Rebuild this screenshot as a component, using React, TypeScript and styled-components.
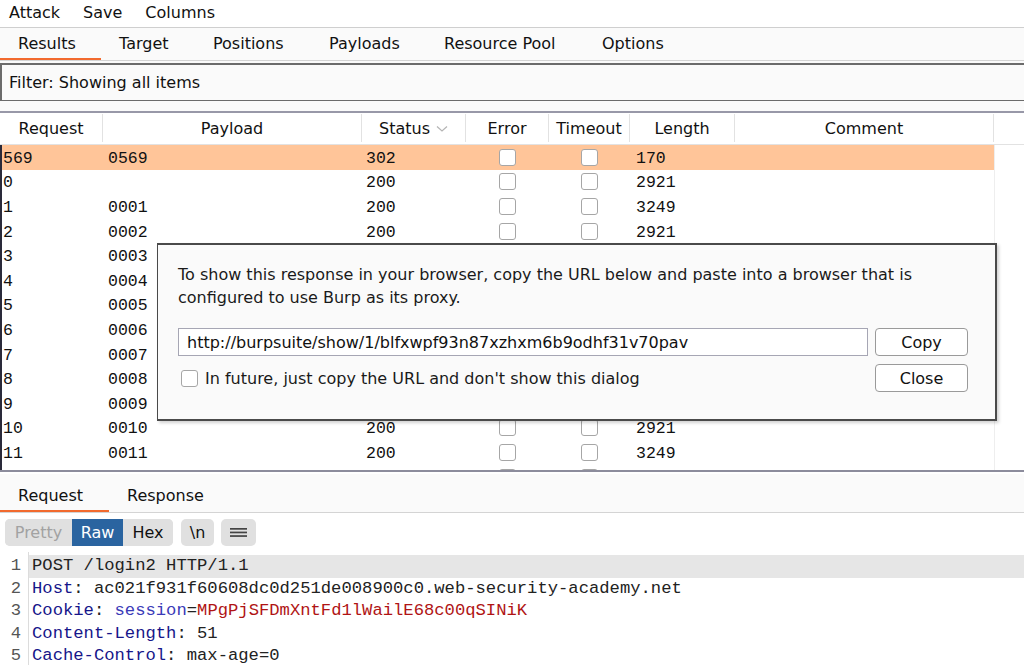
import React from "react";
import styled, { createGlobalStyle } from "styled-components";

const GlobalStyle = createGlobalStyle`
  html, body { margin: 0; padding: 0; background: #ffffff; }
  body { font-family: "DejaVu Sans", "Noto Sans", sans-serif; font-size: 16px; color: #111; }
  * { box-sizing: border-box; }
`;

const Page = styled.div`
  position: relative;
  width: 1024px;
  height: 665px;
  overflow: hidden;
  display: flex;
  flex-direction: column;
  background: #ffffff;
`;

const MenuBar = styled.div`
  height: 28px;
  flex: none;
  display: flex;
  align-items: center;
  gap: 23px;
  padding: 0 0 3px 9px;
  border-bottom: 1px solid #cfcfcf;
  background: #ffffff;
`;

const MenuItem = styled.span`
  color: #111;
`;

const TabBar = styled.div<{ $mt?: number }>`
  flex: none;
  display: flex;
  align-items: stretch;
  margin-top: ${(p) => p.$mt ?? 0}px;
  background: #fafafa;
  border-bottom: 1px solid #d4d4d4;
`;

const Tab = styled.div<{ $active?: boolean; $w: number; $h: number; $top?: number }>`
  width: ${(p) => p.$w}px;
  height: ${(p) => p.$h}px;
  padding-left: 18px;
  padding-top: ${(p) => p.$top ?? 0}px;
  display: flex;
  align-items: center;
  color: #111;
  border-bottom: 2px solid ${(p) => (p.$active ? "#f26a2e" : "transparent")};
  white-space: nowrap;
`;

const FilterArea = styled.div`
  flex: none;
  background: #fafafa;
  padding: 2px 0 10px 0;
`;

const FilterBox = styled.div`
  height: 38px;
  border-top: 2px solid #6b6b6b;
  border-left: 2px solid #6b6b6b;
  border-bottom: 1px solid #6b6b6b;
  display: flex;
  align-items: center;
  padding-left: 7px;
  background: #fafafa;
  color: #111;
`;

const cols = "103px 259px 104px 83px 81px 105px 259px 1fr";

const Table = styled.div`
  flex: none;
  border-top: 2px solid #9898a8;
  border-bottom: 2px solid #8c8c9c;
  background: #ffffff;
`;

const HeaderRow = styled.div`
  display: grid;
  grid-template-columns: ${cols};
  height: 32px;
  border-bottom: 1px solid #e2e2e2;
  background: #ffffff;
`;

const HeaderCell = styled.div`
  display: flex;
  align-items: center;
  justify-content: center;
  gap: 6px;
  padding-top: 1px;
  color: #111;
  border-right: 1px solid #e2e2e2;
  margin: 1px 0 2px;
  &:last-child { border-right: none; }
`;

const Body = styled.div`
  height: 325px;
  overflow: hidden;
  border-left: 2px solid #2a2a3a;
`;

const Row = styled.div`
  display: grid;
  grid-template-columns: 101px 259px 104px 83px 81px 105px 259px 1fr;
  height: 24.6px;
  font-family: "Liberation Mono", "DejaVu Sans Mono", monospace;
  font-size: 16.5px;
  color: #111;
`;

const Cell = styled.div<{ $selected?: boolean; $pad?: number; $center?: boolean; $tail?: boolean }>`
  display: flex;
  align-items: center;
  justify-content: ${(p) => (p.$center ? "center" : "flex-start")};
  padding-left: ${(p) => p.$pad ?? 4}px;
  padding-top: ${(p) => (p.$center ? 0 : 2)}px;
  background: ${(p) => (p.$selected && !p.$tail ? "#ffc599" : "transparent")};
  border-left: ${(p) => (p.$tail ? "1px solid #eeeeee" : "none")};
  white-space: nowrap;
  overflow: hidden;
`;

const Check = styled.span`
  display: inline-block;
  flex: none;
  width: 17px;
  height: 17px;
  border: 1px solid #a6a6a6;
  border-radius: 3px;
  background: #ffffff;
`;

const Bottom = styled.div`
  flex: 1;
  min-height: 0;
  overflow: hidden;
  display: flex;
  flex-direction: column;
  background: #ffffff;
`;

const Toolbar = styled.div`
  flex: none;
  display: flex;
  align-items: center;
  gap: 7px;
  padding: 6px 0 0 5px;
  height: 33px;
`;

const Segmented = styled.div`
  display: flex;
  height: 27px;
  border-radius: 5px;
  overflow: hidden;
  background: #e0e0e0;
  margin-right: 1px;
`;

const SegButton = styled.div<{ $w: number; $active?: boolean; $muted?: boolean }>`
  width: ${(p) => p.$w}px;
  display: flex;
  align-items: center;
  justify-content: center;
  background: ${(p) => (p.$active ? "#2a64a0" : "#e0e0e0")};
  color: ${(p) => (p.$active ? "#ffffff" : p.$muted ? "#a2a2a2" : "#111")};
`;

const ToolButton = styled.div<{ $w: number }>`
  width: ${(p) => p.$w}px;
  height: 27px;
  border-radius: 5px;
  background: #e0e0e0;
  display: flex;
  align-items: center;
  justify-content: center;
  color: #111;
`;

const Editor = styled.div`
  flex: none;
  display: grid;
  grid-template-columns: 29px 1fr;
  margin-top: 6px;
  font-family: "Liberation Mono", "DejaVu Sans Mono", monospace;
  font-size: 17.2px;
`;

const Gutter = styled.div`
  border-right: 1px solid #dcdcdc;
  padding-top: 3px;
  color: #555;
  text-align: right;
  padding-right: 7px;
`;

const Lines = styled.div`
  padding-top: 3px;
`;

const Line = styled.div<{ $hl?: boolean }>`
  height: 22.5px;
  line-height: 22.5px;
  padding-left: 3px;
  white-space: pre;
  color: #222;
  background: ${(p) => (p.$hl ? "#e6e6e6" : "transparent")};
`;

const Num = styled.div`
  height: 22.5px;
  line-height: 22.5px;
`;

const Key = styled.span`
  color: #16168a;
`;
const Attr = styled.span`
  color: #3a3ab8;
`;
const Val = styled.span`
  color: #b01414;
`;

/* Dialog */
const Dialog = styled.div`
  position: absolute;
  left: 157px;
  top: 243px;
  width: 840px;
  height: 178px;
  background: #fafafa;
  border-style: solid;
  border-color: #4a4a4a;
  border-width: 2px 2px 2px 1px;
  box-shadow: 2px 2px 3px rgba(0, 0, 0, 0.18);
  padding: 18px 20px 0 20px;
  color: #1a1a1a;
`;

const Message = styled.p`
  margin: 0;
  line-height: 23px;
`;

const DialogGrid = styled.div`
  display: grid;
  grid-template-columns: 690px 93px;
  column-gap: 7px;
  row-gap: 8px;
  margin-top: 19px;
`;

const UrlField = styled.div`
  height: 28px;
  border: 1px solid #a6a6b4;
  background: #ffffff;
  display: flex;
  align-items: center;
  padding-left: 8px;
  color: #111;
  white-space: nowrap;
`;

const DlgButton = styled.div`
  height: 28px;
  border: 1px solid #9a9a9a;
  border-radius: 4px;
  background: #ffffff;
  display: flex;
  align-items: center;
  justify-content: center;
  color: #111;
`;

const CheckRow = styled.label`
  display: flex;
  align-items: center;
  gap: 7px;
  padding-left: 3px;
`;

const requests: [string, string, string, string][] = [
  ["569", "0569", "302", "170"],
  ["0", "", "200", "2921"],
  ["1", "0001", "200", "3249"],
  ["2", "0002", "200", "2921"],
  ["3", "0003", "200", "2921"],
  ["4", "0004", "200", "2921"],
  ["5", "0005", "200", "3249"],
  ["6", "0006", "200", "2921"],
  ["7", "0007", "200", "2921"],
  ["8", "0008", "200", "3249"],
  ["9", "0009", "200", "2921"],
  ["10", "0010", "200", "2921"],
  ["11", "0011", "200", "3249"],
  ["12", "0012", "200", "2921"],
];

const Chevron = () => (
  <svg width="12" height="8" viewBox="0 0 12 8">
    <path d="M1 1.5 L6 6 L11 1.5" fill="none" stroke="#b4b4b4" strokeWidth="1.2" />
  </svg>
);

const Hamburger = () => (
  <svg width="17" height="9" viewBox="0 0 17 9">
    <rect x="0" y="0" width="17" height="1.7" fill="#444" />
    <rect x="0" y="3.6" width="17" height="1.7" fill="#444" />
    <rect x="0" y="7.2" width="17" height="1.7" fill="#444" />
  </svg>
);

export default function App() {
  return (
    <Page>
      <GlobalStyle />
      <MenuBar>
        <MenuItem>Attack</MenuItem>
        <MenuItem>Save</MenuItem>
        <MenuItem>Columns</MenuItem>
      </MenuBar>
      <TabBar>
        <Tab $active $w={101} $h={32}>Results</Tab>
        <Tab $w={94} $h={32}>Target</Tab>
        <Tab $w={116} $h={32}>Positions</Tab>
        <Tab $w={115} $h={32}>Payloads</Tab>
        <Tab $w={158} $h={32}>Resource Pool</Tab>
        <Tab $w={120} $h={32}>Options</Tab>
      </TabBar>
      <FilterArea>
        <FilterBox>Filter: Showing all items</FilterBox>
      </FilterArea>
      <Table>
        <HeaderRow>
          <HeaderCell>Request</HeaderCell>
          <HeaderCell>Payload</HeaderCell>
          <HeaderCell>
            Status <Chevron />
          </HeaderCell>
          <HeaderCell>Error</HeaderCell>
          <HeaderCell>Timeout</HeaderCell>
          <HeaderCell>Length</HeaderCell>
          <HeaderCell>Comment</HeaderCell>
          <HeaderCell />
        </HeaderRow>
        <Body>
          {requests.map(([req, payload, status, len], i) => {
            const sel = i === 0;
            return (
              <Row key={req}>
                <Cell $selected={sel} $pad={1}>{req}</Cell>
                <Cell $selected={sel} $pad={5}>{payload}</Cell>
                <Cell $selected={sel} $pad={4}>{status}</Cell>
                <Cell $selected={sel} $center $pad={0}><Check /></Cell>
                <Cell $selected={sel} $center $pad={0}><Check /></Cell>
                <Cell $selected={sel} $pad={6}>{len}</Cell>
                <Cell $selected={sel} />
                <Cell $tail />
              </Row>
            );
          })}
        </Body>
      </Table>
      <Bottom>
        <TabBar $mt={2}>
          <Tab $active $w={109} $h={38} $top={6}>Request</Tab>
          <Tab $w={120} $h={38} $top={6}>Response</Tab>
        </TabBar>
        <Toolbar>
          <Segmented>
            <SegButton $w={67} $muted>Pretty</SegButton>
            <SegButton $w={51} $active>Raw</SegButton>
            <SegButton $w={50}>Hex</SegButton>
          </Segmented>
          <ToolButton $w={33}>\n</ToolButton>
          <ToolButton $w={35}><Hamburger /></ToolButton>
        </Toolbar>
        <Editor>
          <Gutter>
            <Num>1</Num>
            <Num>2</Num>
            <Num>3</Num>
            <Num>4</Num>
            <Num>5</Num>
          </Gutter>
          <Lines>
            <Line $hl>POST /login2 HTTP/1.1</Line>
            <Line><Key>Host</Key>: ac021f931f60608dc0d251de008900c0.web-security-academy.net</Line>
            <Line><Key>Cookie</Key>: <Attr>session</Attr>=<Val>MPgPjSFDmXntFd1lWailE68c00qSINiK</Val></Line>
            <Line><Key>Content-Length</Key>: 51</Line>
            <Line><Key>Cache-Control</Key>: max-age=0</Line>
          </Lines>
        </Editor>
      </Bottom>

      <Dialog>
        <Message>
          To show this response in your browser, copy the URL below and paste into a browser that is
          <br />
          configured to use Burp as its proxy.
        </Message>
        <DialogGrid>
          <UrlField>http://burpsuite/show/1/blfxwpf93n87xzhxm6b9odhf31v70pav</UrlField>
          <DlgButton>Copy</DlgButton>
          <CheckRow>
            <Check />
            In future, just copy the URL and don't show this dialog
          </CheckRow>
          <DlgButton>Close</DlgButton>
        </DialogGrid>
      </Dialog>
    </Page>
  );
}
